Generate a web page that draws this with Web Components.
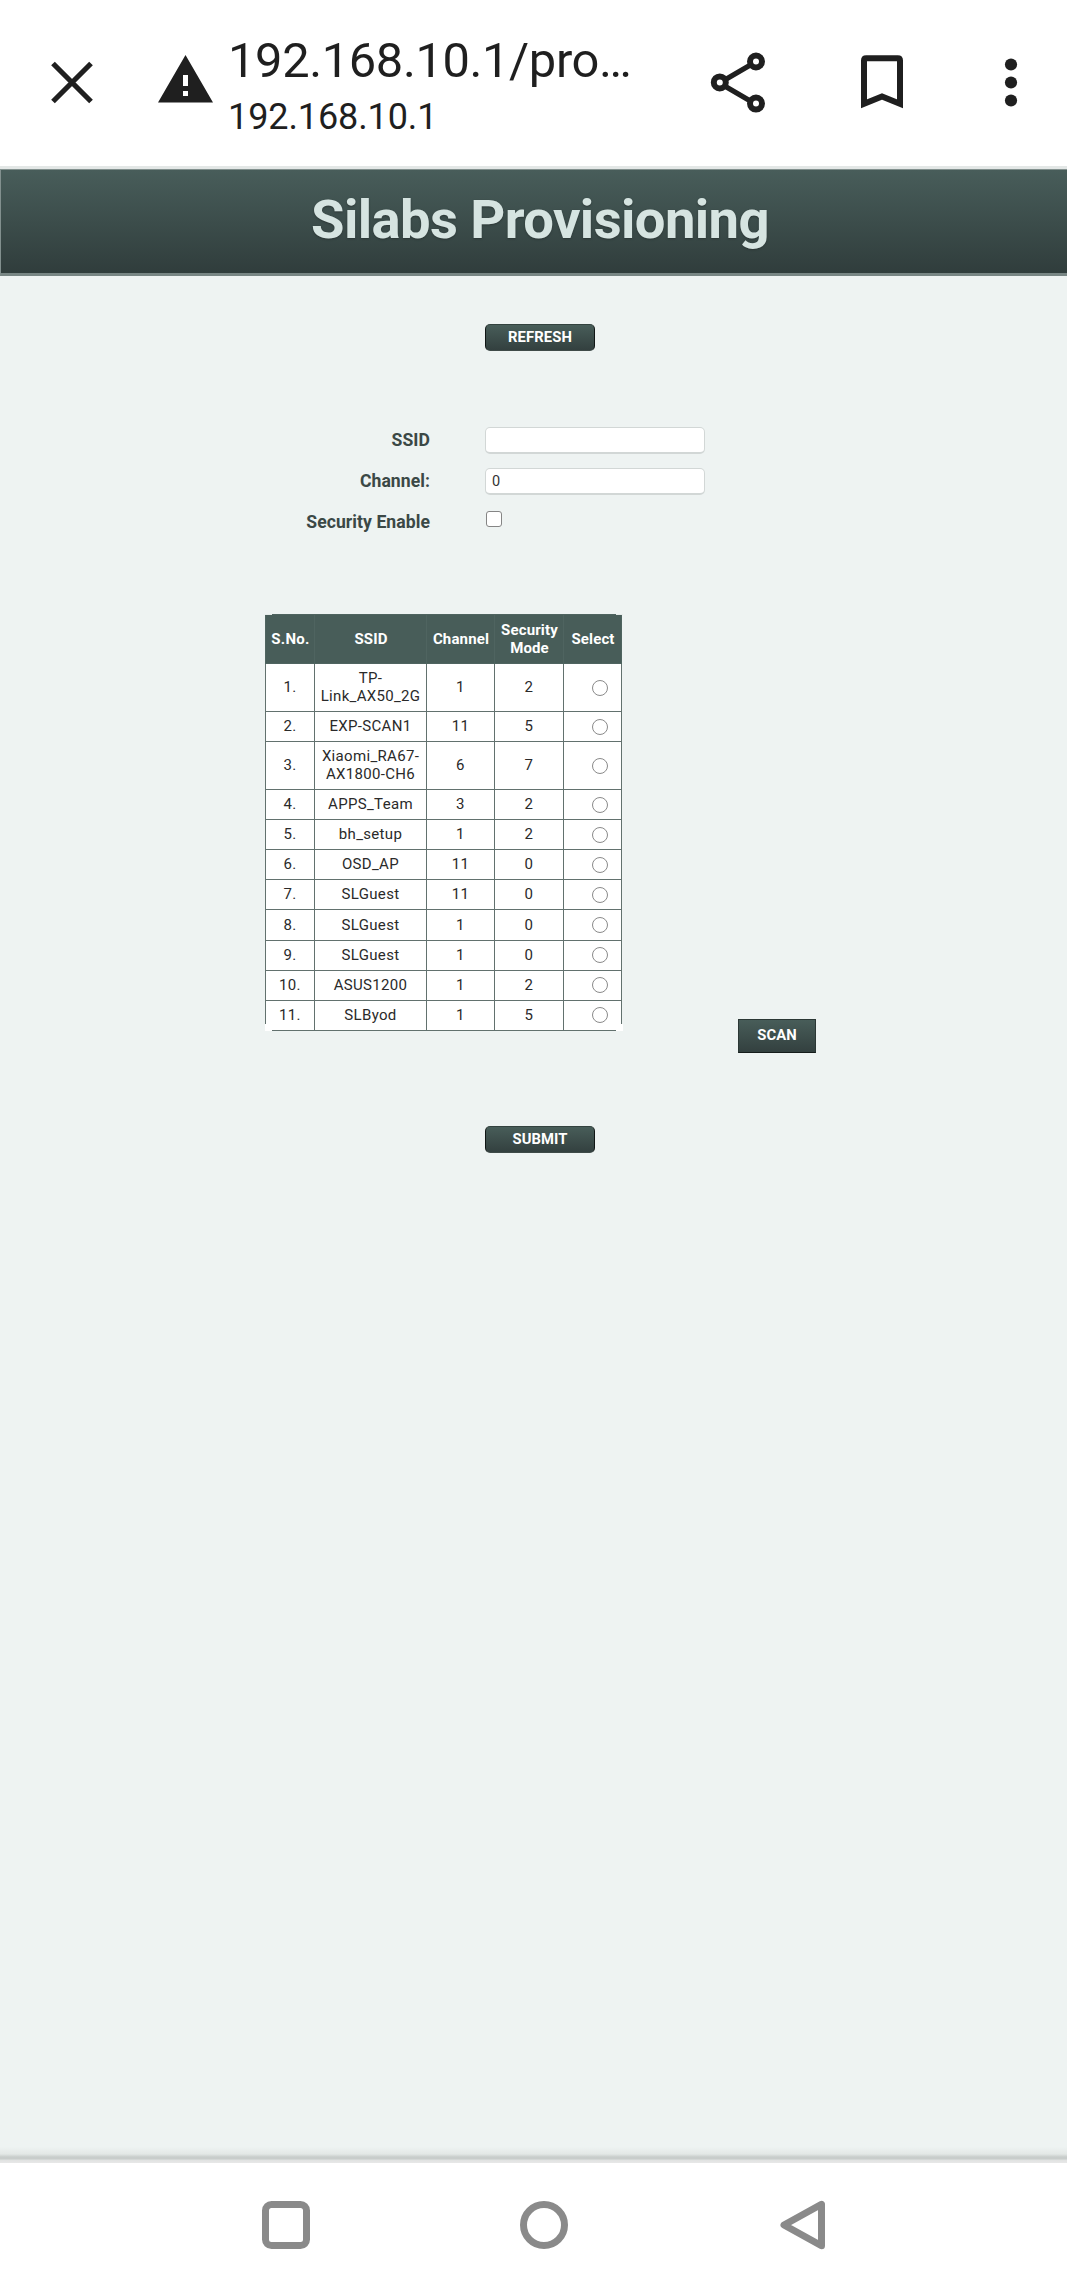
<!DOCTYPE html>
<html lang="en"><head><meta charset="utf-8"><title>Silabs Provisioning</title>
<style>html,body{margin:0;background:#fff}body{font-family:Roboto,"Liberation Sans",sans-serif}</style></head>
<body><provision-app></provision-app>
<script>
const define=(name,html,init)=>customElements.define(name,class extends HTMLElement{
  connectedCallback(){
    if(this.shadowRoot)return;
    const r=this.attachShadow({mode:'open'});
    r.innerHTML=html;
    if(init)init(r,this);
  }
});
define('browser-bar',`<style>
:host{display:flex;height:166px;background:#fff;color:#1f1f1f;border-bottom:3px solid #e3e7e6;box-sizing:content-box}
svg{display:block;flex:none}
.x{margin:59px 0 0 48px}.w{margin:50px 0 0 60px}
.t{width:399px;margin:32px 0 0 12px;white-space:nowrap}
.u{font-size:48.8px;line-height:57px;height:57px;letter-spacing:-.36px}
.h{font-size:36px;line-height:42px;margin-top:7px;letter-spacing:-.1px}
.s{margin:50px 0 0 82px}.b{margin:53px 0 0 90px}.d{margin:55px 0 0 98px}
</style>
<svg class="x" width="48" height="48" viewBox="0 0 48 48"><path d="M5 4.5 43 42.5M43 4.5 5 42.5" stroke="#1f1f1f" stroke-width="5.2" fill="none"/></svg>
<svg class="w" width="60" height="60" viewBox="0 0 24 24"><path fill="#1f1f1f" d="M.8 21h22L11.8 2zM10.8 10h2v4.4h-2zm0 6.4h2v2h-2z" fill-rule="evenodd"/></svg>
<div class="t"><div class="u">192.168.10.1/pro…</div><div class="h">192.168.10.1</div></div>
<svg class="s" width="60" height="66" viewBox="0 0 60 66" fill="none" stroke="#1f1f1f"><path d="M46.5 12 10.5 33 46.5 54" stroke-width="5.2"/><g fill="#fff" stroke-width="6"><circle cx="47" cy="11.5" r="6"/><circle cx="10.8" cy="32.4" r="6"/><circle cx="47" cy="53.6" r="6"/></g></svg>
<svg class="b" width="46" height="60" viewBox="0 0 46 60"><path d="M5 50.8V7.5Q5 5.3 7.2 5.3H38.8Q41 5.3 41 7.5V50.8L23 43.5Z" stroke="#1f1f1f" stroke-width="6" fill="none"/></svg>
<svg class="d" width="16" height="56" viewBox="0 0 16 56" fill="#1f1f1f"><circle cx="8" cy="9.5" r="6.1"/><circle cx="8" cy="27.5" r="6.1"/><circle cx="8" cy="45.5" r="6.1"/></svg>`);
define('page-title',`<style>
:host{display:flex;justify-content:center;box-sizing:border-box;height:107px;padding-left:12px;border:1px solid #82908e;border-bottom:3px solid #788684;border-right:0;background:linear-gradient(#485d5a,#303d3c);color:#d6e4e1;font-weight:700;font-size:54.4px;line-height:64px;letter-spacing:-.6px;text-shadow:0 1px 2px #2a3534;padding-top:18px}
</style><div><slot></slot></div>`);
define('action-button',`<style>
:host{display:block}
button{display:block;box-sizing:border-box;width:110px;height:27px;margin:0;padding:0 0 1px;border:1px solid #101615;border-top-color:#33423f;border-bottom-color:#3f4b49;border-radius:5px;background:linear-gradient(#485d59,#33403f);color:#fff;font:700 14.8px/23px Roboto,sans-serif;text-align:center;letter-spacing:.1px}
:host([square]) button{width:78px;height:34px;border-radius:0;border-color:#2b3735;border-bottom:1px solid #151c1b}
</style><button><slot></slot></button>`);
define('form-row',`<style>
:host{display:flex;height:41px;align-items:flex-start}
label{width:430px;text-align:right;font-weight:700;font-size:17.6px;line-height:26px;letter-spacing:.06px;color:#3b4846;white-space:nowrap}
.f{margin-left:55px;box-sizing:border-box;width:220px;height:27px;border:1px solid #d2d7d6;border-bottom-width:2px;border-radius:5px;background:#fff;font-size:14.5px;line-height:26px;padding:0 6px;color:#333}
:host([check]) .f{width:16px;height:16px;margin:2px 0 0 56px;padding:0;border:1px solid #858585;border-radius:3px}
</style><label></label><div class="f"><slot></slot></div>`,(r,h)=>{r.querySelector('label').textContent=h.getAttribute('label')});
define('network-table',`<style>
:host{display:block;position:relative;width:357px;height:417px;background:#fff}
table{border-collapse:collapse;table-layout:fixed;width:357px;font-size:15px;line-height:18px;letter-spacing:.32px;color:#2a2a2a}
td,th{padding:0;text-align:center;border:1px solid #62716e;box-sizing:border-box;white-space:nowrap}
th{height:49px;background:#485d59;color:#fff;border-color:#4f6460;letter-spacing:.15px;padding-left:1px}
th:first-child{letter-spacing:.3px}
td{height:30.1px;padding-bottom:1px}tr.two td{height:48px}
i{display:block;box-sizing:border-box;width:16px;height:16px;border:1.3px solid #8a8a8a;border-radius:50%;margin:1px 0 0 28px}
b{position:absolute;width:7px;height:7px;box-sizing:border-box;border:0 solid #fff}
b:nth-of-type(1){left:0;bottom:0;border-width:0 0 2px 2px}
b:nth-of-type(2){right:-1px;bottom:0;border-width:0 2px 2px 0}
b:nth-of-type(3){left:0;top:0;border:0 solid #e5eae9;border-top-width:1px}
b:nth-of-type(4){right:-1px;top:0;border:0 solid #e5eae9;border-top-width:1px}
</style><table><colgroup><col style="width:49px"><col style="width:112px"><col style="width:68px"><col style="width:69px"><col style="width:58px"></colgroup><thead><tr><th>S.No.</th><th>SSID</th><th>Channel</th><th>Security<br>Mode</th><th>Select</th></tr></thead><tbody></tbody></table><b></b><b></b><b></b><b></b>`,r=>{
 const rows=[['TP-<br>Link_AX50_2G',1,2],['EXP-SCAN1',11,5],['Xiaomi_RA67-<br>AX1800-CH6',6,7],['APPS_Team',3,2],['bh_setup',1,2],['OSD_AP',11,0],['SLGuest',11,0],['SLGuest',1,0],['SLGuest',1,0],['ASUS1200',1,2],['SLByod',1,5]];
 r.querySelector('tbody').innerHTML=rows.map((x,n)=>`<tr${x[0].includes('<br>')?' class="two"':''}><td>${n+1}.</td><td>${x[0]}</td><td>${x[1]}</td><td>${x[2]}</td><td><i></i></td></tr>`).join('');
});
define('nav-bar',`<style>
:host{display:flex;height:128px;background:#fff}
svg{display:block;margin-top:37px;flex:none}.a{margin-left:260px}.b{margin-left:206px}.c{margin-left:206px}
</style>
<svg class="a" width="52" height="52" viewBox="0 0 52 52" fill="none" stroke="#8a8a8a" stroke-width="7"><rect x="5.5" y="4.5" width="41" height="41" rx="6"/></svg>
<svg class="b" width="52" height="52" viewBox="0 0 52 52" fill="none" stroke="#8a8a8a" stroke-width="7"><circle cx="26" cy="25" r="20.5"/></svg>
<svg class="c" width="52" height="52" viewBox="0 0 52 52" fill="none" stroke="#8a8a8a" stroke-width="7" stroke-linejoin="round"><path d="M45.5 4.3V45.7L8 25Z"/></svg>`);
define('provision-app',`<style>
:host{display:flex;flex-direction:column;height:2291px;width:1067px}
main{height:1887px;box-sizing:border-box;background:linear-gradient(#eef3f2 0,#eef3f2 1871px,#e3e8e6 1878px,#c8cdcb 1881px,#c8cdcb 1883px,#e0e2e1 1884px,#e8e8e8 1887px);padding-top:48px}
.go{margin-left:485px}.form{margin-top:76px}
.net{display:flex;margin:64px 0 0 265px;gap:116px;align-items:flex-start}.net action-button{margin-top:405px}
.submit{margin:73px 0 0 485px}
</style>
<browser-bar></browser-bar><page-title>Silabs Provisioning</page-title>
<main><action-button class="go">REFRESH</action-button>
<div class="form"><form-row label="SSID"></form-row><form-row label="Channel:">0</form-row><form-row label="Security Enable" check></form-row></div>
<div class="net"><network-table></network-table><action-button square>SCAN</action-button></div>
<action-button class="submit">SUBMIT</action-button></main>
<nav-bar></nav-bar>`);
</script></body></html>
